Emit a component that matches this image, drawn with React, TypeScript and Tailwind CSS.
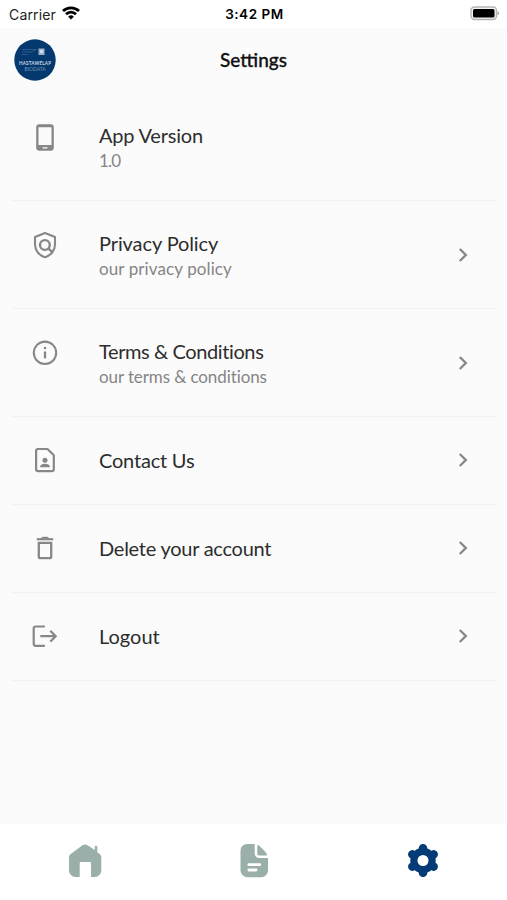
import type { ReactNode } from "react";
import clsx from "clsx";

type SettingsItem = {
  title: string;
  subtitle?: string;
  icon: ReactNode;
  titleClass?: string;
  subtitleClass?: string;
  hideArrow?: boolean;
};

const PhoneIcon = () => (
  <svg viewBox="0 0 30 30" className="h-[30px] w-[30px]">
    <path
      fillRule="evenodd"
      d="M9.2 2.2h11.6a3 3 0 0 1 3 3v20.500a3 3 0 0 1-3 3H9.200a3 3 0 0 1-3-3V5.200a3 3 0 0 1 3-3zM8.500 5.200v17.800h13V5.200z"
      fill="currentColor"
    />
    <path d="M13 25.800h4" stroke="#fafafa" strokeWidth="1.300" strokeLinecap="round" />
  </svg>
);

const PolicyIcon = () => (
  <svg viewBox="0 0 30 30" className="h-[30px] w-[30px]" fill="none" stroke="currentColor" strokeWidth="2.1" strokeLinejoin="round">
    <path d="M15 3 25 6.9v7.3c0 6-3.9 11.200-10 13-6.100-1.800-10-7-10-13V6.900z" />
    <circle cx="14.9" cy="15" r="4.9" strokeWidth="2.4" />
    <path d="m18.300 18.400 4.200 4.100" strokeWidth="2.400" />
  </svg>
);

const InfoIcon = () => (
  <svg viewBox="0 0 30 30" className="h-[30px] w-[30px]" fill="none" stroke="currentColor">
    <circle cx="15" cy="14.8" r="11.2" strokeWidth="2.1" />
    <path d="M15 14.300v5.300" strokeWidth="2.300" strokeLinecap="round" />
    <circle cx="15" cy="10" r="1.300" fill="currentColor" stroke="none" />
  </svg>
);

const ContactIcon = () => (
  <svg viewBox="0 0 30 30" className="h-[30px] w-[30px]">
    <path
      d="M8 4h9.500l6.300 6.300v13.900a1.900 1.900 0 0 1-1.900 1.900H8a1.900 1.900 0 0 1-1.900-1.900V5.900A1.900 1.900 0 0 1 8 4z"
      fill="none"
      stroke="currentColor"
      strokeWidth="2.200"
      strokeLinejoin="round"
    />
    <circle cx="15" cy="15.200" r="2.500" fill="currentColor" />
    <path d="M10.200 22.200v-1c0-1.600 2.400-2.500 4.800-2.500s4.800.9 4.800 2.500v1z" fill="currentColor" />
  </svg>
);

const TrashIcon = () => (
  <svg viewBox="0 0 30 30" className="h-[30px] w-[30px]" fill="none" stroke="currentColor">
    <path d="M6.800 6.200h16.400" strokeWidth="2.200" />
    <path d="M11.200 5.200 12.300 4h5.400l1.100 1.200z" fill="currentColor" strokeWidth=".4" />
    <path d="M8.800 9.800h12.400v13.600a1.700 1.700 0 0 1-1.700 1.700h-9a1.700 1.700 0 0 1-1.700-1.700z" strokeWidth="2.300" />
  </svg>
);

const LogoutIcon = () => (
  <svg viewBox="0 0 30 30" className="h-[30px] w-[30px]" fill="none" stroke="currentColor" strokeWidth="2.200">
    <path d="M14.900 5.500H5.700a2 2 0 0 0-2 2v15.300a2 2 0 0 0 2 2h9.200" />
    <path d="M10.300 15.200h15.200M20.300 9.800l5.400 5.400-5.400 5.400" />
  </svg>
);

const items: SettingsItem[] = [
  {
    title: "App Version",
    subtitle: "1.0",
    icon: <PhoneIcon />,
    titleClass: "tracking-[-0.2px]",
    subtitleClass: "tracking-[-0.8px]",
    hideArrow: true,
  },
  {
    title: "Privacy Policy",
    subtitle: "our privacy policy",
    icon: <PolicyIcon />,
    titleClass: "tracking-[-0.1px]",
    subtitleClass: "tracking-[0.1px]",
  },
  {
    title: "Terms & Conditions",
    subtitle: "our terms & conditions",
    icon: <InfoIcon />,
    titleClass: "tracking-[-0.4px]",
    subtitleClass: "tracking-[-0.1px]",
  },
  { title: "Contact Us", icon: <ContactIcon />, titleClass: "tracking-[-0.2px]" },
  { title: "Delete your account", icon: <TrashIcon />, titleClass: "tracking-[-0.25px]" },
  { title: "Logout", icon: <LogoutIcon /> },
];

function StatusBar() {
  return (
    <div className="grid h-7 grid-cols-3 items-center bg-white pl-[9px] pr-[7px] font-['Inter'] text-[14px] text-[#222]">
      <div className="flex items-center gap-[6px]">
        <span className="tracking-[0.15px]">Carrier</span>
        <svg viewBox="0 0 18 14" className="-mt-[2px] h-[14px] w-[18px]" fill="none" stroke="#000" strokeWidth="2.800">
          <path d="M1 5.100a11.300 11.300 0 0 1 16 0" />
          <path d="M4 8.300a7 7 0 0 1 10 0" />
          <path d="m9 13.600-2.900-2.900a4.100 4.100 0 0 1 5.800 0z" fill="#000" stroke="none" />
        </svg>
      </div>
      <div className="text-center text-[13.500px] font-semibold tracking-[0.550px] text-black">3:42 PM</div>
      <div className="-mt-[2px] flex justify-end">
        <svg viewBox="0 0 30 15" className="h-[15px] w-[30px]">
          <rect x="1" y="1" width="25.500" height="12.500" rx="3.500" fill="#f4f4f4" stroke="#b5b5b5" strokeWidth="1.400" />
          <rect x="3" y="3" width="21.500" height="8.500" rx="1.500" fill="#000" />
          <path d="M27.700 5.200c1.800.8 1.800 3.300 0 4.100z" fill="#999" />
        </svg>
      </div>
    </div>
  );
}

function Logo() {
  return (
    <svg viewBox="0 0 42 42" className="-mt-[2px] h-[42px] w-[42px]">
      <circle cx="21" cy="21" r="20.700" fill="#04396f" />
      <path d="M8 10.500h15M8 13h10M8 15.500h6M18 13l4-2.500" stroke="#3d6792" strokeWidth=".7" fill="none" />
      <rect x="24.500" y="9.500" width="6" height="6.500" fill="#9db2c9" />
      <path d="M26 11h3v3h-3z" fill="#d3dde8" />
      <text x="21" y="26.400" textAnchor="middle" textLength="32" fontSize="4.600" fontWeight="700" fill="#c8d5e3" fontFamily="Lato, sans-serif">
        HASTAWELAP
      </text>
      <text x="21" y="31.800" textAnchor="middle" textLength="21" fontSize="4.800" fill="#7896b5" fontFamily="Lato, sans-serif">
        BIODATA
      </text>
    </svg>
  );
}

function SettingsRow({ item }: { item: SettingsItem }) {
  return (
    <button
      className={clsx(
        "flex w-full items-center border-b border-[#f1f1f1] pl-[18px] pr-[27px] text-left",
        item.subtitle ? "h-[108px]" : "h-[88px] pb-[2px]",
      )}
    >
      <span className={clsx("text-[#878787]", item.subtitle && "-mt-[19px]")}>{item.icon}</span>
      <span className={clsx("ml-[39px] flex flex-1 flex-col", item.subtitle && "pt-[2px]")}>
        <span className={clsx("whitespace-nowrap text-[20px] leading-[26px] text-[#2d2d2d]", item.titleClass)}>
          {item.title}
        </span>
        {item.subtitle && (
          <span className={clsx("whitespace-nowrap text-[17px] leading-[25px] text-[#858585]", item.subtitleClass)}>
            {item.subtitle}
          </span>
        )}
      </span>
      {!item.hideArrow && (
        <svg viewBox="0 0 14 18" className="h-[18px] w-[14px]" fill="none" stroke="#888" strokeWidth="2.400">
          <path d="m3.800 3 6 6-6 6" />
        </svg>
      )}
    </button>
  );
}

function BottomNav() {
  return (
    <nav className="grid h-[76px] grid-cols-3 bg-white pt-[17px]">
      <button className="flex justify-center">
        <svg viewBox="0 0 40 40" className="h-10 w-10" fill="#9aafa9">
          <path d="M17.500 4.200c1.500-1.100 3.500-1.100 5 0l7.300 4.900V6.100a1.200 1.200 0 0 1 2.500 0v5.200l2.400 1.700a4.500 4.500 0 0 1 1.600 3.400v13.100a6.500 6.500 0 0 1-6.500 6.500h-3.800V22.300a1.400 1.400 0 0 0-1.400-1.400h-8.500a1.400 1.400 0 0 0-1.400 1.400V36h-4.200A6.500 6.500 0 0 1 4 29.500V16.400c0-1.400.6-2.600 1.700-3.400z" />
        </svg>
      </button>
      <button className="flex justify-center">
        <svg viewBox="0 0 40 40" className="h-10 w-10">
          <path d="M13.500 3H20.700v9.500a4.500 4.500 0 0 0 4.500 4.500H34v12.500a6.700 6.700 0 0 1-6.700 6.700H13.500A7 7 0 0 1 6.500 29.500V9.700A6.700 6.700 0 0 1 13.500 3z" fill="#9aafa9" />
          <path d="M23.300 3.700c.8.300 1.500.8 2.200 1.400l6 6c.8.800 1.400 2.100 1.600 3.400H25a1.700 1.700 0 0 1-1.700-1.700z" fill="#9aafa9" />
          <path d="M14.800 23.700h11M14.800 29h7.300" stroke="#fff" strokeWidth="2.800" strokeLinecap="round" />
        </svg>
      </button>
      <button className="flex justify-center">
        <svg viewBox="-20 -19.5 40 40" className="h-10 w-10" fill="#043a75">
          <circle r="12.700" />
          <path
            d="M0-12.300V12.300M-10.650-6.150 10.650 6.150M-10.650 6.150 10.650-6.150"
            stroke="#043a75"
            strokeWidth="8.600"
            strokeLinecap="round"
          />
          <circle r="5.500" fill="#fff" />
        </svg>
      </button>
    </nav>
  );
}

export default function App() {
  return (
    <div className="flex h-screen w-full flex-col overflow-hidden bg-[#fbfbfb] font-['Lato',sans-serif]">
      <StatusBar />
      <header className="grid h-[65px] grid-cols-[1fr_auto_1fr] items-center px-[14px]">
        <Logo />
        <h1 className="text-[19px] font-medium text-[#111] [-webkit-text-stroke:0.3px_#111]">Settings</h1>
      </header>
      <main className="flex-1 pl-3 pr-[10px]">
        {items.map((item) => (
          <SettingsRow key={item.title} item={item} />
        ))}
      </main>
      <BottomNav />
    </div>
  );
}
